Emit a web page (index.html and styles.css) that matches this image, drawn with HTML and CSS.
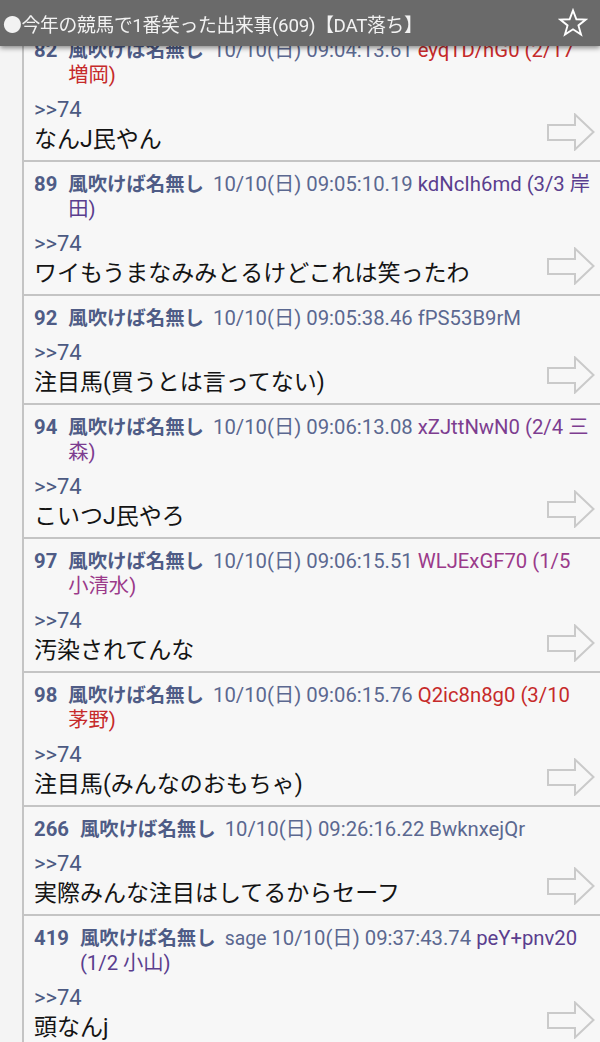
FILE: index.html
```html
<!DOCTYPE html>
<html lang="ja">
<head>
<meta charset="utf-8">
<link rel="stylesheet" href="styles.css">
</head>
<body>
<header class="appbar">
  <div class="title">●今年の競馬で1番笑った出来事(609)【DAT落ち】</div>
  <svg class="star" viewBox="0 0 32 32" width="30" height="30"><path d="M16 2.5 L19.6 12 L29.6 12.3 L21.8 18.6 L24.6 28.4 L16 22.7 L7.4 28.4 L10.2 18.6 L2.4 12.3 L12.4 12 Z" fill="none" stroke="#fff" stroke-width="2" stroke-linejoin="miter"/></svg>
</header>
<main class="thread">
  <div class="gutter"></div>
  <div class="posts">
    <article class="post">
      <div class="head"><span class="num">82</span><span class="meta"><b class="name">風吹けば名無し</b> <span class="date">10/10(日) 09:04:13.61</span> <span class="id red">eyqTD/nG0 (2/17 増岡)</span></span></div>
      <div class="body"><div class="anchor">&gt;&gt;74</div><div class="msg">なんJ民やん</div></div>
      <svg class="arrow" viewBox="0 0 48 38" width="48" height="38"><path d="M1 12 H28 V1.5 L46.5 19 L28 36.5 V27 H1 Z" fill="none" stroke="#cacaca" stroke-width="2"/></svg>
    </article>
    <article class="post">
      <div class="head"><span class="num">89</span><span class="meta"><b class="name">風吹けば名無し</b> <span class="date">10/10(日) 09:05:10.19</span> <span class="id purple">kdNcIh6md (3/3 岸田)</span></span></div>
      <div class="body"><div class="anchor">&gt;&gt;74</div><div class="msg">ワイもうまなみみとるけどこれは笑ったわ</div></div>
      <svg class="arrow" viewBox="0 0 48 38" width="48" height="38"><path d="M1 12 H28 V1.5 L46.5 19 L28 36.5 V27 H1 Z" fill="none" stroke="#cacaca" stroke-width="2"/></svg>
    </article>
    <article class="post">
      <div class="head"><span class="num">92</span><span class="meta"><b class="name">風吹けば名無し</b> <span class="date">10/10(日) 09:05:38.46</span> <span class="id slate">fPS53B9rM</span></span></div>
      <div class="body"><div class="anchor">&gt;&gt;74</div><div class="msg">注目馬(買うとは言ってない)</div></div>
      <svg class="arrow" viewBox="0 0 48 38" width="48" height="38"><path d="M1 12 H28 V1.5 L46.5 19 L28 36.5 V27 H1 Z" fill="none" stroke="#cacaca" stroke-width="2"/></svg>
    </article>
    <article class="post">
      <div class="head"><span class="num">94</span><span class="meta"><b class="name">風吹けば名無し</b> <span class="date">10/10(日) 09:06:13.08</span> <span class="id violet">xZJttNwN0 (2/4 三森)</span></span></div>
      <div class="body"><div class="anchor">&gt;&gt;74</div><div class="msg">こいつJ民やろ</div></div>
      <svg class="arrow" viewBox="0 0 48 38" width="48" height="38"><path d="M1 12 H28 V1.5 L46.5 19 L28 36.5 V27 H1 Z" fill="none" stroke="#cacaca" stroke-width="2"/></svg>
    </article>
    <article class="post">
      <div class="head"><span class="num">97</span><span class="meta"><b class="name">風吹けば名無し</b> <span class="date">10/10(日) 09:06:15.51</span> <span class="id magenta">WLJExGF70 (1/5 小清水)</span></span></div>
      <div class="body"><div class="anchor">&gt;&gt;74</div><div class="msg">汚染されてんな</div></div>
      <svg class="arrow" viewBox="0 0 48 38" width="48" height="38"><path d="M1 12 H28 V1.5 L46.5 19 L28 36.5 V27 H1 Z" fill="none" stroke="#cacaca" stroke-width="2"/></svg>
    </article>
    <article class="post">
      <div class="head"><span class="num">98</span><span class="meta"><b class="name">風吹けば名無し</b> <span class="date">10/10(日) 09:06:15.76</span> <span class="id red">Q2ic8n8g0 (3/10 茅野)</span></span></div>
      <div class="body"><div class="anchor">&gt;&gt;74</div><div class="msg">注目馬(みんなのおもちゃ)</div></div>
      <svg class="arrow" viewBox="0 0 48 38" width="48" height="38"><path d="M1 12 H28 V1.5 L46.5 19 L28 36.5 V27 H1 Z" fill="none" stroke="#cacaca" stroke-width="2"/></svg>
    </article>
    <article class="post">
      <div class="head"><span class="num">266</span><span class="meta"><b class="name">風吹けば名無し</b> <span class="date">10/10(日) 09:26:16.22</span> <span class="id slate">BwknxejQr</span></span></div>
      <div class="body"><div class="anchor">&gt;&gt;74</div><div class="msg">実際みんな注目はしてるからセーフ</div></div>
      <svg class="arrow" viewBox="0 0 48 38" width="48" height="38"><path d="M1 12 H28 V1.5 L46.5 19 L28 36.5 V27 H1 Z" fill="none" stroke="#cacaca" stroke-width="2"/></svg>
    </article>
    <article class="post">
      <div class="head"><span class="num">419</span><span class="meta"><b class="name">風吹けば名無し</b> <span class="sage">sage</span> <span class="date">10/10(日) 09:37:43.74</span> <span class="id purple">peY+pnv20 (1/2 小山)</span></span></div>
      <div class="body"><div class="anchor">&gt;&gt;74</div><div class="msg">頭なんj</div></div>
      <svg class="arrow" viewBox="0 0 48 38" width="48" height="38"><path d="M1 12 H28 V1.5 L46.5 19 L28 36.5 V27 H1 Z" fill="none" stroke="#cacaca" stroke-width="2"/></svg>
    </article>
  </div>
</main>
</body>
</html>
```
FILE: styles.css
```css
html, body {
  margin: 0;
  padding: 0;
  background: #f4f4f4;
}
body {
  font-family: Roboto, "Noto Sans CJK JP", sans-serif;
  width: 600px;
  height: 1042px;
  overflow: hidden;
}
.appbar {
  position: fixed;
  top: 0;
  left: 0;
  right: 0;
  height: 46px;
  background: #6a6a6a;
  box-shadow: 0 2px 5px rgba(0,0,0,0.45);
  display: flex;
  align-items: center;
  justify-content: space-between;
  padding: 0 12px 0 3px;
  z-index: 10;
}
.title {
  color: #f2f2f2;
  font-size: 18.8px;
  letter-spacing: -0.3px;
  white-space: nowrap;
}
.star {
  display: block;
}
.thread {
  display: flex;
  padding-top: 28px;
  min-height: 1100px;
}
.gutter {
  width: 22px;
  flex: none;
  border-right: 2px solid #c4c4c4;
  background: #f4f4f4;
}
.posts {
  flex: 1;
  background: #f7f7f7;
}
.post {
  position: relative;
  padding: 10px 8px 5px 10px;
  border-bottom: 2px solid #c4c4c4;
}
.head {
  display: flex;
  gap: 11px;
  font-size: 20.3px;
  line-height: 25px;
  color: #57648e;
  margin-bottom: 7px;
}
.num {
  font-weight: bold;
  color: #4f5c86;
  flex: none;
}
.name {
  color: #4f5c86;
  font-size: 19.4px;
  margin-right: 4px;
}
.sage {
  color: #5b6890;
  font-size: 19.4px;
}
.date {
  color: #5b6890;
}
.id.red { color: #c62a2a; }
.id.purple { color: #5a3e8e; }
.id.slate { color: #5b6890; }
.id.violet { color: #7d3d90; }
.id.magenta { color: #9b3a8a; }
.anchor {
  font-size: 22px;
  line-height: 30px;
  color: #4c5a82;
}
.msg {
  font-size: 23px;
  line-height: 30px;
  color: #141414;
}
.arrow {
  position: absolute;
  right: 5px;
  bottom: 9px;
}
```
